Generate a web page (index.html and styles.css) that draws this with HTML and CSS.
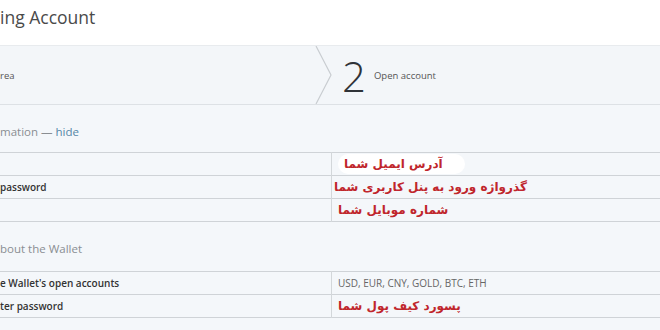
FILE: index.html
```html
<!DOCTYPE html>
<html lang="en">
<head>
  <meta charset="UTF-8">
  <title>Opening Account</title>
  <link rel="stylesheet" href="styles.css">
</head>
<body>
  <div class="page">
    <div class="title">ing Account</div>

    <!-- steps -->
    <div class="steps">
      <div class="step step-first">
        <span class="step-label">rea</span>
        <svg class="chevron" width="18" height="58" viewBox="0 0 18 58">
          <polyline points="1,0 16,29 1,58" fill="none" stroke="#c9cdd1" stroke-width="1.2"/>
        </svg>
      </div>
      <div class="step">
        <span class="step-num">2</span>
        <span class="step-label">Open account</span>
      </div>
    </div>

    <!-- personal info -->
    <div class="section">
      <div class="section-head">mation — <a class="toggle" href="#">hide</a></div>
      <table class="info">
        <tr>
          <td class="key"></td>
          <td class="val"><span class="fa fa-hl">آدرس ایمیل شما</span></td>
        </tr>
        <tr>
          <td class="key">password</td>
          <td class="val"><span class="fa fa-tight">گذرواژه ورود به پنل کاربری شما</span></td>
        </tr>
        <tr>
          <td class="key"></td>
          <td class="val"><span class="fa">شماره موبایل شما</span></td>
        </tr>
      </table>

      <div class="section-head wallet-head">bout the Wallet</div>
      <table class="info">
        <tr>
          <td class="key">e Wallet's open accounts</td>
          <td class="val plain">USD, EUR, CNY, GOLD, BTC, ETH</td>
        </tr>
        <tr>
          <td class="key">ter password</td>
          <td class="val"><span class="fa">پسورد کیف پول شما</span></td>
        </tr>
      </table>
    </div>
  </div>
</body>
</html>
```

FILE: styles.css
```css
body {
  margin: 0;
  background: #f4f7fa;
  font-family: 'Open Sans', Arial, sans-serif;
  color: #444;
  overflow: hidden;
}
.page {
  width: 660px;
  height: 330px;
  overflow: hidden;
}
.title {
  height: 45px;
  box-sizing: border-box;
  padding-top: 4px;
  background: #fff;
  font-size: 17.5px;
  color: #4a4a4a;
  line-height: 26px;
}
.steps {
  display: flex;
  height: 58px;
  background: #f3f6f9;
  border-top: 1px solid #e8ebee;
  border-bottom: 1px solid #dde1e5;
}
.step {
  display: flex;
  align-items: center;
}
.step-first {
  width: 333px;
  justify-content: space-between;
}
.chevron {
  display: block;
}
.step-label {
  font-size: 9.5px;
  color: #555;
}
.step-num {
  font-size: 42px;
  font-weight: 300;
  color: #2f3338;
  margin: 0 8px 0 9px;
  line-height: 1;
  position: relative;
  top: 1px;
}
.section {
  background: #f4f7fa;
}
.section-head {
  height: 47px;
  box-sizing: border-box;
  padding-top: 18px;
  font-size: 11.5px;
  color: #8a8e92;
  line-height: 18px;
}
.wallet-head {
  height: 49px;
  padding-top: 18px;
}
.toggle {
  color: #5486a6;
  text-decoration: none;
}
.info {
  width: 660px;
  border-collapse: collapse;
}
.info tr {
  border-top: 1px solid #cfd3d7;
  border-bottom: 1px solid #cfd3d7;
}
.info td {
  height: 22px;
  padding: 0;
  font-size: 10px;
}
.key {
  width: 331px;
  font-weight: 600;
  color: #333;
  border-right: 1px solid #d3d7da;
}
.val {
  padding-left: 6px !important;
}
.plain {
  color: #666;
  font-size: 9.5px;
}
.fa {
  display: inline-block;
  direction: rtl;
  font-family: 'DejaVu Sans', sans-serif;
  font-weight: bold;
  font-size: 12px;
  color: #c0262c;
  line-height: 20px;
}
.fa-hl {
  background: #fff;
  border-radius: 10px;
  padding: 0 22px 0 6px;
}
.fa-tight {
  margin-left: -4px;
}
```
